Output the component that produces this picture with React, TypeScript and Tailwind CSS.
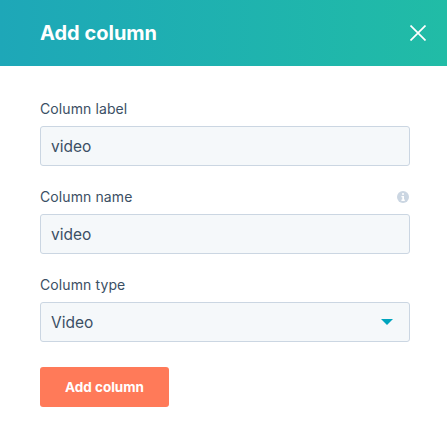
import React from "react";

function Field({ label, value, info, select }: { label: string; value: string; info?: boolean; select?: boolean }) {
  return (
    <div className="flex flex-col">
      <div className="flex h-[27px] items-start justify-between">
        <span className="text-[14px] leading-[20px] tracking-[0.1px] text-[#3b4f64]">{label}</span>
        {info && (
          <svg className="mr-px mt-[4px]" width="12" height="12" viewBox="0 0 12 12" aria-hidden="true">
            <circle cx="6" cy="6" r="6" fill="#cbd6e2" />
            <rect x="5" y="2" width="2" height="2" rx="1" fill="#fff" />
            <path d="M4.4 5h2.6v3.6h.8V10H4.4V8.6h.9V6.3h-.9z" fill="#fff" />
          </svg>
        )}
      </div>
      <div className="flex h-10 items-center justify-between rounded-[3px] border border-[#cbd6e2] bg-[#f5f8fa] pl-[10px] pr-4">
        <span className="pt-[1px] text-[15.5px] leading-[22px] text-[#3b4f64]">{value}</span>
        {select && (
          <svg width="12" height="6" viewBox="0 0 12 6" aria-hidden="true">
            <path d="M0 0h12L6 6z" fill="#00a4bd" />
          </svg>
        )}
      </div>
    </div>
  );
}

export default function App() {
  return (
    <div className="h-[431px] w-[447px] overflow-hidden bg-white font-['Inter','Open_Sans',sans-serif]">
      <header className="flex h-[66px] items-center justify-between bg-gradient-to-r from-[#1ea7b8] to-[#21bca6] pl-10 pr-[21px]">
        <h1 className="text-[20px] font-bold leading-none text-white">Add column</h1>
        <svg width="16" height="16" viewBox="0 0 16 16" aria-label="Close">
          <path d="M0.5 0.5l15 15M15.5 0.5l-15 15" stroke="#fff" strokeWidth="1.7" fill="none" />
        </svg>
      </header>
      <div className="flex flex-col gap-[21px] pl-10 pr-[37px] pt-[33px]">
        <Field label="Column label" value="video" />
        <Field label="Column name" value="video" info />
        <Field label="Column type" value="Video" select />
      </div>
      <button className="ml-10 mt-[25px] flex h-10 w-[129px] items-center justify-center rounded-[3px] bg-[#ff7a59] text-[13.5px] font-bold text-white">
        Add column
      </button>
    </div>
  );
}
